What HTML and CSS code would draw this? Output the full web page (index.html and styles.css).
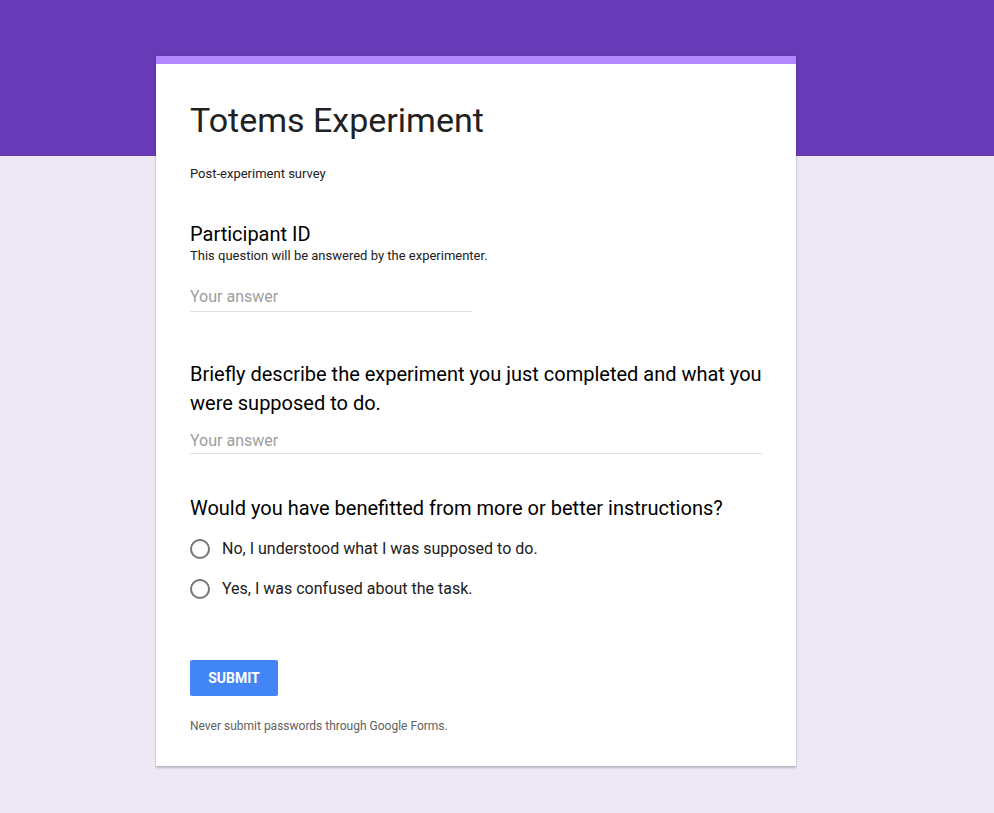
FILE: index.html
```html
<!DOCTYPE html>
<html>
<head>
<meta charset="utf-8">
<link rel="stylesheet" href="styles.css">
</head>
<body>
<div class="band"></div>
<main class="page">
  <div class="card">
    <div class="accent"></div>
    <div class="content">
      <header class="head">
        <h1 class="title">Totems Experiment</h1>
        <p class="desc">Post-experiment survey</p>
      </header>

      <section class="q q1">
        <div class="q-title">Participant ID</div>
        <div class="q-help">This question will be answered by the experimenter.</div>
        <div class="input short">Your answer</div>
      </section>

      <section class="q q2">
        <div class="q-title big">Briefly describe the experiment you just completed and what you were supposed to do.</div>
        <div class="input long">Your answer</div>
      </section>

      <section class="q q3">
        <div class="q-title big">Would you have benefitted from more or better instructions?</div>
        <div class="options">
          <label class="opt"><span class="radio"></span><span>No, I understood what I was supposed to do.</span></label>
          <label class="opt"><span class="radio"></span><span>Yes, I was confused about the task.</span></label>
        </div>
      </section>

      <div class="actions">
        <button class="submit">SUBMIT</button>
      </div>
      <p class="note">Never submit passwords through Google Forms.</p>
    </div>
  </div>
</main>
</body>
</html>
```

FILE: styles.css
```css
* { box-sizing: border-box; }
html, body { margin: 0; padding: 0; }
body {
  background: #ede7f6;
  font-family: Roboto, "Liberation Sans", Arial, sans-serif;
  color: #212121;
  min-height: 813px;
}
.band {
  background: #673ab7;
  height: 156px;
}
.page {
  margin-top: -100px;
  display: flex;
  justify-content: flex-start;
  padding-left: 156px;
}
.card {
  width: 640px;
  background: #fff;
  box-shadow: 0 2px 2px rgba(0,0,0,0.2), 0 0 2px rgba(0,0,0,0.12);
}
.accent {
  height: 8px;
  background: #b388ff;
}
.content {
  padding: 36px 34px 32px 34px;
}
.title {
  margin: 0;
  font-weight: 400;
  font-size: 34px;
  line-height: 40px;
  color: #212121;
}
.desc {
  margin: 25px 0 0 0;
  font-size: 13px;
  line-height: 17px;
  color: #212121;
}
.q-title {
  font-size: 20px;
  line-height: 24px;
  color: #000;
}
.q-title.big {
  line-height: 29px;
}
.q-help {
  font-size: 13px;
  line-height: 20px;
  color: #212121;
}
.q1 { margin-top: 40px; }
.q2 { margin-top: 48px; }
.q3 { margin-top: 40px; }
.input {
  font-size: 16px;
  line-height: 20px;
  color: #9e9e9e;
  border-bottom: 1px solid #e0e0e0;
}
.q1 .input { margin-top: 21px; width: 282px; padding-bottom: 4px; }
.q2 .input { margin-top: 13px; padding-bottom: 2px; }
.options {
  margin-top: 16px;
  display: flex;
  flex-direction: column;
  gap: 20px;
}
.opt {
  display: flex;
  align-items: center;
  gap: 12px;
  font-size: 16px;
  line-height: 20px;
  color: #212121;
}
.radio {
  width: 20px;
  height: 20px;
  border-radius: 50%;
  border: 2px solid #757575;
  flex: none;
}
.actions { margin-top: 61px; }
.submit {
  width: 88px;
  height: 36px;
  border: none;
  border-radius: 2px;
  background: #4285f4;
  color: #fff;
  font-family: Roboto, "Liberation Sans", Arial, sans-serif;
  font-weight: 700;
  font-size: 14px;
  padding: 0;
}
.note {
  margin: 22px 0 0 0;
  font-size: 12px;
  line-height: 16px;
  color: #616161;
}
```
